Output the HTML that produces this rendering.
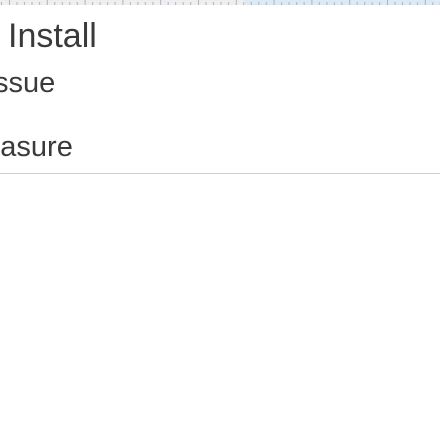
<!DOCTYPE html>
<html><head><style>
html,body{margin:0;padding:0;background:#fff;width:440px;height:440px;overflow:hidden;font-family:"Liberation Sans",Arial,sans-serif;color:#333}
.wrap{position:absolute;left:0;top:0;width:440px;height:440px;overflow:hidden}
.t{position:absolute;white-space:nowrap;line-height:1;color:#3a3a3a}
</style></head><body><div class="wrap">
<svg style="position:absolute;left:0;top:0" width="440" height="6">
<rect x="0" y="0" width="245" height="5" fill="#efefef"/>
<rect x="245" y="0" width="195" height="5" fill="#dde9f3"/>
<g stroke="#a8b4c8" stroke-width="1">
<line x1="1.5" y1="2" x2="1.5" y2="5"/>
</g>
<defs><pattern id="p" x="9" y="0" width="37.8" height="5" patternUnits="userSpaceOnUse">
<g stroke="#a8b4c8" stroke-width="1"><line x1="0.5" y1="0" x2="0.5" y2="5"/><line x1="8" y1="2" x2="8" y2="5"/><line x1="15.5" y1="2" x2="15.5" y2="5"/><line x1="23" y1="2" x2="23" y2="5"/><line x1="30.5" y1="2" x2="30.5" y2="5"/></g>
</pattern></defs>
<rect x="9" y="0" width="431" height="5" fill="url(#p)"/>
</svg>
<div class="t" style="left:8px;top:19px;font-size:34px">Install</div>
<div class="t" style="left:-14px;top:69px;font-size:29px">Issue</div>
<div class="t" style="left:-40px;top:133px;font-size:29px">Measure</div>
<div style="position:absolute;left:0;top:173px;width:440px;height:1px;background:#d0d0d0"></div>
</div></body></html>
